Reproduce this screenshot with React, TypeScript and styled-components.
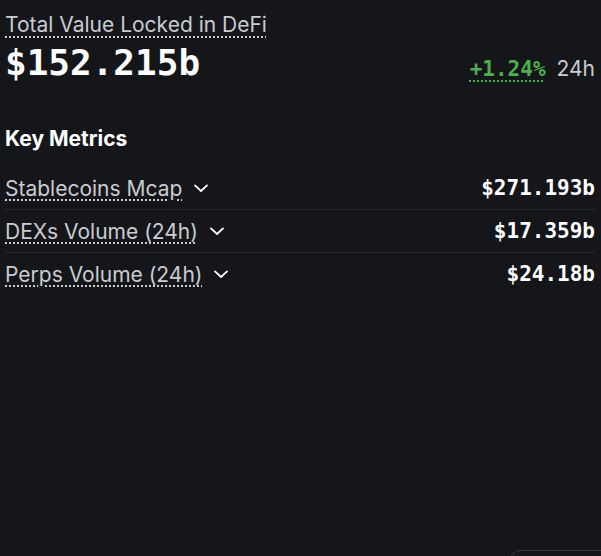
import styled, { createGlobalStyle } from "styled-components";

const GlobalStyle = createGlobalStyle`
  html, body {
    margin: 0;
    padding: 0;
    background: #151619;
  }
  body {
    font-family: Inter, "Noto Sans", sans-serif;
    color: #ffffff;
  }
`;

const Page = styled.div`
  width: 601px;
  height: 556px;
  box-sizing: border-box;
  padding: 12px 6px 0 5px;
  overflow: hidden;
  position: relative;
`;

const Hint = styled.span<{ $color?: string }>`
  color: ${(p) => p.$color ?? "#c9ccd1"};
  text-decoration: underline dotted;
  text-decoration-color: ${(p) => p.$color ?? "#c9ccd1"};
  text-underline-offset: 4px;
  text-decoration-thickness: 2px;
  cursor: help;
`;

const Title = styled.div`
  font-size: 21px;
  line-height: 26px;
`;

const TvlRow = styled.div`
  display: flex;
  align-items: flex-end;
  justify-content: space-between;
  margin-top: 3px;
`;

const Mono = styled.span`
  font-family: "DejaVu Sans Mono", "Liberation Mono", monospace;
  font-weight: 700;
`;

const BigValue = styled(Mono)`
  font-size: 36px;
  line-height: 44px;
`;

const Change = styled.div`
  display: flex;
  align-items: baseline;
  gap: 11px;
  font-size: 21px;
  margin-bottom: 4px;
`;

const Period = styled.span`
  color: #c9ccd1;
`;

const SectionTitle = styled.h2`
  margin: 41px 0 15px;
  font-size: 21px;
  font-weight: 700;
  line-height: 26px;
`;

const MetricList = styled.div`
  display: flex;
  flex-direction: column;
`;

const MetricRow = styled.div`
  display: flex;
  align-items: center;
  justify-content: space-between;
  height: 42px;
  font-size: 21px;
  border-bottom: 1px solid #26282c;

  &:last-child {
    border-bottom: none;
  }
`;

const Label = styled.div`
  display: flex;
  align-items: center;
  gap: 10px;
`;

const Value = styled(Mono)`
  font-size: 21px;
`;

const Corner = styled.div`
  position: absolute;
  left: 510px;
  top: 550px;
  width: 140px;
  height: 40px;
  border: 1px solid #3a3c40;
  border-radius: 10px;
`;

const Chevron = () => (
  <svg width="18" height="18" viewBox="0 0 24 24" fill="none" stroke="#ffffff" strokeWidth="2.4" strokeLinecap="round" strokeLinejoin="round">
    <path d="M4 8.5l8 7.5 8-7.5" />
  </svg>
);

const metrics = [
  { name: "Stablecoins Mcap", value: "$271.193b" },
  { name: "DEXs Volume (24h)", value: "$17.359b" },
  { name: "Perps Volume (24h)", value: "$24.18b" },
];

export default function App() {
  return (
    <Page>
      <GlobalStyle />
      <Title>
        <Hint>Total Value Locked in DeFi</Hint>
      </Title>
      <TvlRow>
        <BigValue>$152.215b</BigValue>
        <Change>
          <Mono>
            <Hint $color="#4caf50">+1.24%</Hint>
          </Mono>
          <Period>24h</Period>
        </Change>
      </TvlRow>
      <SectionTitle>Key Metrics</SectionTitle>
      <MetricList>
        {metrics.map((m) => (
          <MetricRow key={m.name}>
            <Label>
              <Hint>{m.name}</Hint>
              <Chevron />
            </Label>
            <Value>{m.value}</Value>
          </MetricRow>
        ))}
      </MetricList>
      <Corner />
    </Page>
  );
}
